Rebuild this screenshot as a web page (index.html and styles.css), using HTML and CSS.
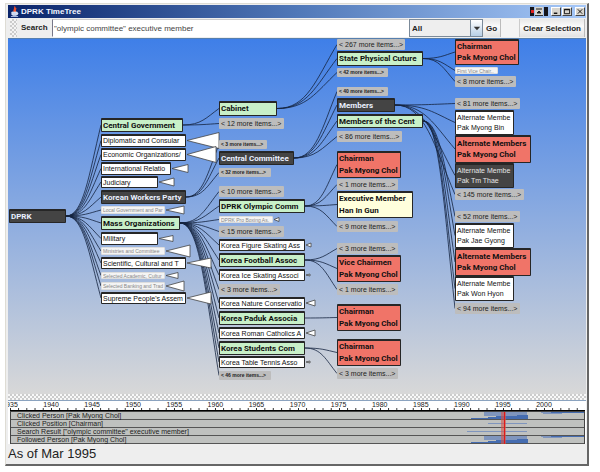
FILE: index.html
```html
<!DOCTYPE html>
<html lang="en">
<head>
<meta charset="utf-8">
<title>DPRK TimeTree</title>
<link rel="stylesheet" href="styles.css">
</head>
<body>
<main class="window">
  <header class="titlebar">
    <svg class="java" viewBox="0 0 10 12" aria-hidden="true">
      <path d="M5 0C7 2 3 3 5 6M7 2C5 3 6 4 6 6" fill="none" stroke="#f0502c" stroke-width="1.5"/>
      <path d="M2 6h6v3q-3 2-6 0zM8 7q2 0 0 2" fill="#c9d6f2" stroke="#e4ebfa" stroke-width=".8"/>
      <path d="M1 11h8" stroke="#b6c6ec"/>
    </svg>
    <h1 class="title">DPRK TimeTree</h1>
    <div class="controls">
      <svg class="desk" viewBox="0 0 18 9" aria-hidden="true">
        <path d="M0 0h4v9H0zM14 0h4v9h-4z" fill="#15151c"/><path d="M5 0h8v9H5z" fill="#d8d5ce"/>
        <path d="M6 2h6M7 6l2-2 2 2z" stroke="#222" fill="#222"/><path d="M1 3h3v3H1z" fill="#e02020"/><path d="M5 8.500h8" stroke="#333"/>
      </svg>
      <button class="wbtn" aria-label="Minimize"><svg viewBox="0 0 9 8"><path d="M2 6h4" stroke="#000" stroke-width="1.5"/></svg></button>
      <button class="wbtn" aria-label="Maximize"><svg viewBox="0 0 9 8"><path d="M1.500 1.500h6v5h-6zM1.500 2h6" fill="none" stroke="#000"/></svg></button>
      <button class="wbtn close" aria-label="Close"><svg viewBox="0 0 9 8"><path d="M2 1.500l5 5M7 1.500l-5 5" stroke="#000"/></svg></button>
    </div>
  </header>
  <form class="toolbar" onsubmit="return false">
    <span class="grip"></span>
    <label class="label" for="query">Search</label>
    <div class="querybox"><input class="query" id="query" type="text" value="&quot;olympic committee&quot; executive member"></div>
    <div class="scopebox">
      <select class="scope" aria-label="Scope"><option>All</option></select>
      <svg class="arrow" viewBox="0 0 12 17" aria-hidden="true"><path d="M3 7h7L6.500 11z" fill="#333"/></svg>
    </div>
    <button class="tool">Go</button>
    <span class="gap"></span>
    <button class="tool">Clear Selection</button>
  </form>
  <section class="canvas" id="canvas" aria-label="Tree">
    <svg class="links" id="links" aria-hidden="true"></svg>
  </section>
  <div class="splitter"></div>
  <section class="timeline" aria-label="Timeline">
    <div class="ruler" id="ruler"></div>
    <div class="tracks" id="tracks"></div>
  </section>
  <footer class="status">As of Mar 1995</footer>
</main>
<script src="script.js"></script>
</body>
</html>
```
FILE: styles.css
```css
* { box-sizing: border-box; }
body {
  margin: 0;
  padding: 3px 11px 6px 5px;
  min-height: 100vh;
  display: flex;
  background: #fff;
  color: #222;
  font-family: "Liberation Sans", Arial, sans-serif;
  font-size: 8px;
}
button, input, select { font: inherit; color: inherit; margin: 0; }
.window {
  flex: 1;
  min-width: 0;
  display: flex;
  flex-direction: column;
  background: #eee;
  border: 1px solid #dedcd4;
  border-right: 2px solid #666;
  border-bottom: 2px solid #666;
  padding: 1px 1px 0 2px;
}
.titlebar {
  display: flex;
  align-items: center;
  height: 13px;
  padding: 0 1px 0 2px;
  gap: 2px;
  background: linear-gradient(90deg, #0a246a, #5078b8 50%, #a6c8f8);
}
.java { width: 9px; height: 12px; }
.title {
  flex: 1;
  margin: 0;
  color: #f2f5ff;
  font-size: 8px;
  font-weight: bold;
}
.controls { display: flex; gap: 1px; align-items: center; }
.desk { width: 18px; height: 9px; margin-right: 2px; }
.wbtn {
  display: flex;
  width: 10px;
  height: 9px;
  padding: 0;
  background: #d8d5ce;
  border: 1px solid #fff;
  border-right-color: #444;
  border-bottom-color: #444;
}
.wbtn svg { width: 100%; height: 100%; }
.close { margin-left: 2px; }
.toolbar {
  display: flex;
  height: 20px;
  padding: 1px 1px 1px 2px;
  background: #eee;
  font-weight: bold;
  line-height: 17px;
}
.grip {
  width: 7px;
  margin-right: 4px;
  background: repeating-conic-gradient(#ccc 0 25%, #f4f4f4 0 50%) 0 0 / 4px 4px;
}
.label { width: 31px; }
.querybox { flex: 1; min-width: 0; display: flex; }
.query {
  width: 100%;
  padding: 0 1px;
  background: #fff;
  border: 1px solid #fff;
  border-left-color: #778;
  border-top-color: #ccc;
  color: #444;
  font-weight: normal;
}
.scopebox { position: relative; width: 74px; display: flex; }
.scope {
  width: 100%;
  appearance: none;
  padding: 0 2px;
  background: #eee;
  border: 1px solid #7b8a99;
  border-radius: 0;
  font-weight: bold;
}
.arrow {
  position: absolute;
  right: 1px;
  top: 1px;
  width: 12px;
  height: 16px;
  background: linear-gradient(#fff, #b8cfe5);
  border-left: 1px solid #7b8a99;
  pointer-events: none;
}
.tool {
  padding: 0 3px;
  background: linear-gradient(#e8e8e8, #fafafa 40%, #e2e2e2);
  border: 0;
  border-right: 1px solid #bbb;
}
.gap { width: 19px; border-right: 1px solid #ccc; background: #f4f4f4; }
.canvas {
  flex: 1;
  min-height: 355px;
  position: relative;
  overflow: hidden;
  border-top: 1px solid #567fae;
  background: linear-gradient(#3f7fe8, #d8d8d8);
}
.links { position: absolute; inset: 0; width: 100%; height: 100%; }
.link { fill: none; stroke: #14233f; stroke-width: .8; }
.wedge { fill: #fff; stroke: #444; stroke-width: .8; }
.node {
  position: absolute;
  display: flex;
  flex-direction: column;
  justify-content: space-evenly;
  padding: 0 1px;
  white-space: nowrap;
  text-align: left;
  border: 1px solid #262626;
  border-top-width: 2px;
  border-radius: 1px;
  line-height: 10px;
  color: #111;
}
.green, .red, .yellow, .dark {
  font-family: Roboto, "Liberation Sans", sans-serif;
  font-size: 8px;
  font-weight: bold;
}
.green { background: #c8f0c8; }
.red { background: #f07468; }
.yellow { background: #ffffdc; }
.dark { background: #444; color: #eaf0ff; }
.white { background: #fff; font-size: 7px; }
.dim { background: #444; color: #e4e4e4; font-size: 7px; }
.more, .few { background: #bdbdbd; border: 0; padding: 0 2px; font-size: 7px; color: #222; }
.few { font-size: 5px; font-weight: bold; line-height: 7px; }
.faint { background: #f4f4f4; border: 1px solid #ddd; font-size: 5px; line-height: 6px; color: #888; }
.splitter {
  height: 7px;
  border-bottom: 1px solid #8ba3bf;
  background: repeating-conic-gradient(#ccc 0 25%, #f8f8f8 0 50%) 0 0 / 4px 4px;
}
.timeline { padding: 0 1px 0 2px; overflow: hidden; background: #fff; }
.ruler {
  display: flex;
  height: 10px;
  border-bottom: 1px solid #000;
  font-size: 7px;
  line-height: 7px;
}
.year { flex: 1; min-width: 0; background: linear-gradient(90deg, #222 1px, transparent 1px) 0 100% / 20% 2px repeat-x; }
.year span { display: block; width: 16px; margin-left: -8px; text-align: center; }
.tracks { position: relative; border: 1px solid #444; border-bottom: 0; }
.track {
  position: relative;
  height: 8px;
  padding-left: 6px;
  border-bottom: 1px solid #555;
  background: #bfc1bf;
  font-size: 7px;
  line-height: 7px;
}
.span { position: absolute; background: #7f95bd; }
.strong { background: #456cb0; }
.cursor { position: absolute; top: 0; bottom: 0; width: 5px; background: linear-gradient(90deg, #d3564c99 3px, #e01818 3px 4px, #d3564c99 4px); }
.status { height: 20px; font-size: 13px; line-height: 20px; }
```
FILE: script.js
```js
// id: [kind, x, y, width, height, lines, wedge length, wedge half height]
const nodes = {
  root: ['dark', 1, 170, 57, 14, ['DPRK']],
  cg: ['green', 93, 79, 82, 14, ['Central Government']],
  dip: ['white', 93, 95, 85, 13, ['Diplomatic and Consular'], 32, 8],
  eco: ['white', 93, 109, 85, 13, ['Economic Organizations/'], 29, 8],
  int: ['white', 93, 123, 70, 13, ['International Relatio'], 16, 4],
  jud: ['white', 93, 137, 57, 12, ['Judiciary'], 15, 4],
  kwp: ['dark', 93, 151, 85, 14, ['Korean Workers Party']],
  loc: ['faint', 93, 167, 64, 8, ['Local Government and Par'], 18, 4],
  mass: ['green', 93, 177, 79, 14, ['Mass Organizations']],
  mil: ['white', 93, 193, 57, 13, ['Military'], 14, 3],
  min: ['faint', 93, 208, 64, 8, ['Ministries and Committee'], 24, 6],
  sci: ['white', 93, 218, 85, 12, ['Scientific, Cultural and T'], 24, 5],
  aca: ['faint', 93, 233, 64, 7, ['Selected Academic, Cultur'], 12, 3],
  ban: ['faint', 93, 243, 64, 8, ['Selected Banking and Trad'], 18, 5],
  sup: ['white', 93, 253, 85, 12, ["Supreme People's Assem"], 24, 6],

  cab: ['green', 211, 62, 58, 15, ['Cabinet']],
  m12: ['more', 211, 79, 65, 11, ['< 12 more items...>']],
  m3a: ['few', 211, 101, 48, 9, ['< 3 more items...>']],
  cc: ['dark', 211, 112, 75, 14, ['Central Committee']],
  m32: ['few', 211, 129, 52, 9, ['< 32 more items...>']],
  m10: ['more', 211, 147, 65, 11, ['< 10 more items...>']],
  oly: ['green', 211, 160, 86, 14, ['DPRK Olympic Comm']],
  box: ['faint', 211, 177, 54, 7, ['DPRK Pro Boxing As.'], 5, 2],
  m15: ['more', 211, 187, 65, 11, ['< 15 more items...>']],
  fig: ['white', 211, 200, 86, 12, ['Korea Figure Skating Ass'], 5, 2],
  foo: ['green', 211, 214, 86, 14, ['Korea Football Assoc']],
  ice: ['white', 211, 230, 86, 12, ['Korea Ice Skating Associ'], 4, 1],
  m3b: ['more', 211, 245, 61, 11, ['< 3 more items...>']],
  nat: ['white', 211, 258, 86, 12, ['Korea Nature Conservatio'], 9, 3],
  pad: ['green', 211, 272, 86, 14, ['Korea Paduk Associa']],
  rom: ['white', 211, 288, 86, 12, ['Korea Roman Catholics A'], 9, 3],
  stu: ['green', 211, 302, 86, 14, ['Korea Students Com']],
  tab: ['white', 211, 317, 86, 12, ['Korea Table Tennis Asso'], 4, 1],
  m46: ['few', 211, 332, 52, 9, ['< 46 more items...>']],

  m267: ['more', 329, 0, 68, 11, ['< 267 more items...>']],
  spc: ['green', 329, 12, 86, 15, ['State Physical Cuture']],
  m42: ['few', 329, 29, 51, 9, ['< 42 more items...>']],
  m40: ['few', 329, 48, 51, 9, ['< 40 more items...>']],
  mem: ['dark', 329, 59, 58, 14, ['Members']],
  moc: ['green', 329, 75, 86, 14, ['Members of the Cent']],
  m86: ['more', 329, 92, 65, 11, ['< 86 more items...>']],
  ch1: ['red', 329, 112, 64, 27, ['Chairman', 'Pak Myong Chol']],
  m1a: ['more', 329, 140, 61, 11, ['< 1 more items...>']],
  exe: ['yellow', 329, 152, 76, 27, ['Executive Member', 'Han In Gun']],
  m9: ['more', 329, 182, 61, 11, ['< 9 more items...>']],
  m3c: ['more', 329, 204, 61, 11, ['< 3 more items...>']],
  vic: ['red', 329, 216, 64, 27, ['Vice Chairmen', 'Pak Myong Chol']],
  m1b: ['more', 329, 245, 61, 11, ['< 1 more items...>']],
  ch2: ['red', 329, 265, 64, 27, ['Chairman', 'Pak Myong Chol']],
  ch3: ['red', 329, 300, 64, 27, ['Chairman', 'Pak Myong Chol']],
  m3d: ['more', 329, 329, 61, 11, ['< 3 more items...>']],

  ch4: ['red', 447, 0, 64, 26, ['Chairman', 'Pak Myong Chol']],
  fvc: ['faint', 447, 28, 43, 7, ['First Vice Chair..']],
  m8: ['more', 447, 37, 61, 11, ['< 8 more items...>']],
  m81: ['more', 447, 59, 65, 11, ['< 81 more items...>']],
  a1: ['white', 447, 71, 59, 25, ['Alternate Membe', 'Pak Myong Bin']],
  am1: ['red', 447, 96, 76, 28, ['Alternate Members', 'Pak Myong Chol']],
  a2: ['dim', 447, 124, 59, 25, ['Alternate Membe', 'Pak Tm Thae']],
  m145: ['more', 447, 150, 69, 11, ['< 145 more items...>']],
  m52: ['more', 447, 172, 65, 11, ['< 52 more items...>']],
  a3: ['white', 447, 184, 59, 25, ['Alternate Membe', 'Pak Jae Gyong']],
  am2: ['red', 447, 209, 76, 28, ['Alternate Members', 'Pak Myong Chol']],
  a4: ['white', 447, 237, 59, 25, ['Alternate Membe', 'Pak Won Hyon']],
  m94: ['more', 447, 264, 65, 11, ['< 94 more items...>']]
};

const children = {
  root: 'cg dip eco int jud kwp loc mass mil min sci aca ban sup',
  cg: 'cab m12',
  kwp: 'm3a cc m32',
  mass: 'm10 oly box m15 fig foo ice m3b nat pad rom stu tab m46',
  cab: 'm267 spc m42',
  cc: 'm40 mem moc m86',
  oly: 'ch1 m1a exe m9',
  foo: 'm3c vic m1b',
  pad: 'ch2',
  stu: 'ch3 m3d',
  spc: 'ch4 fvc m8',
  mem: 'm81 a1 am1 a2 m145',
  moc: 'm52 a3 am2 a4 m94'
};

const canvas = document.getElementById('canvas');
const links = document.getElementById('links');

function addPath(cls, d) {
  const p = document.createElementNS('http://www.w3.org/2000/svg', 'path');
  p.setAttribute('class', cls);
  p.setAttribute('d', d);
  links.append(p);
}

for (const [from, list] of Object.entries(children)) {
  const [, x, y, w, h] = nodes[from];
  const sx = x + w, sy = y + h / 2;
  for (const to of list.split(' ')) {
    const [, ex, ty, , th] = nodes[to];
    const ey = ty + th / 2, dx = ex - sx, dy = ey - sy;
    addPath('link', `M${sx} ${sy}C${sx + dx * 0.5} ${sy} ${ex - dx * 0.35} ${sy + dy * 0.45} ${ex} ${ey}`);
  }
}

for (const [kind, x, y, w, h, lines, len, half] of Object.values(nodes)) {
  if (len) {
    const ax = x + w + 1, ay = y + h / 2;
    addPath('wedge', `M${ax} ${ay}L${ax + len} ${ay - half}V${ay + half}Z`);
  }
  const el = document.createElement('button');
  el.className = 'node ' + kind;
  el.style.cssText = `left:${x}px;top:${y}px;width:${w}px;height:${h}px`;
  for (const line of lines) {
    const s = document.createElement('span');
    s.textContent = line;
    el.append(s);
  }
  canvas.append(el);
}

const ruler = document.getElementById('ruler');
for (let year = 1935; year < 2005; year += 5) {
  const cell = document.createElement('div');
  cell.className = 'year';
  cell.innerHTML = `<span>${year}</span>`;
  ruler.append(cell);
}

// Spans: [start year, end year, top, height, strong]
const career = [
  [1992.8, 1998, 0, 4], [1991.2, 1998, 6, 1, 1], [1993.3, 1998, 5, 1, 1],
  [1996.8, 1998.1, 3, 4, 1], [1994.3, 1998, 4, 3, 1],
  [2000, 2002.3, 1, 1], [1999.8, 2005, 0, 1], [2001, 2005, 0, 1, 1]
];
const tracks = [
  ['Clicked Person [Pak Myong Chol]', career],
  ['Clicked Position [Chairman]', [[1993.3, 1998, 3, 1]]],
  ['Search Result ["olympic committee" executive member]', [[1990.7, 1998, 3, 1]]],
  ['Followed Person [Pak Myong Chol]', career]
];
const pct = years => years / 70 * 100 + '%';
const trackBox = document.getElementById('tracks');
for (const [name, spans] of tracks) {
  const row = document.createElement('div');
  row.className = 'track';
  row.textContent = name;
  for (const [a, b, top, height, strong] of spans) {
    const bar = document.createElement('i');
    bar.className = strong ? 'span strong' : 'span';
    bar.style.cssText = `left:${pct(a - 1935)};width:${pct(b - a)};top:${top}px;height:${height}px`;
    row.append(bar);
  }
  trackBox.append(row);
}
const cursor = document.createElement('div');
cursor.className = 'cursor';
cursor.style.left = pct(1994.8 - 1935);
trackBox.append(cursor);
```
